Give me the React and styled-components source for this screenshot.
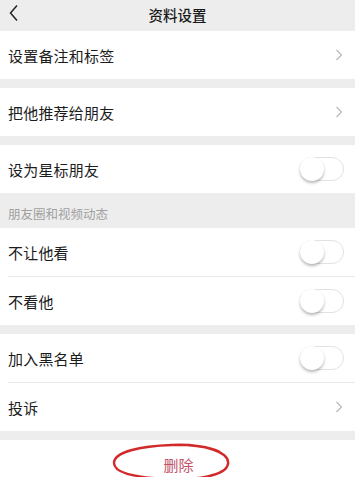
import React from "react";
import styled, { createGlobalStyle } from "styled-components";

const GlobalStyle = createGlobalStyle`
  html, body {
    margin: 0;
    padding: 0;
    background: #ededed;
    font-family: "Noto Sans CJK SC", "Noto Sans", sans-serif;
    color: #1c1c1c;
  }
`;

const Page = styled.div`
  width: 355px;
  display: flex;
  flex-direction: column;
  background: #ededed;
`;

const Header = styled.div`
  height: 31px;
  position: relative;
  display: flex;
  align-items: center;
  justify-content: center;
  background: #ededed;
`;

const Title = styled.div`
  font-size: 14.5px;
  font-weight: 500;
  color: #1a1a1a;
  margin-top: -3px;
`;

const Back = styled.svg`
  position: absolute;
  left: 8px;
  top: 4px;
`;

const Group = styled.div`
  background: #fff;
  display: flex;
  flex-direction: column;
  margin-bottom: ${(p) => (p.$gap ? "9px" : "0")};
`;

const Row = styled.div`
  height: 48px;
  display: flex;
  align-items: center;
  justify-content: space-between;
  padding-right: 12px;
  font-size: 15px;
  letter-spacing: 0.2px;
  border-top: ${(p) => (p.$divider ? "1px solid #eaeaea" : "none")};
  margin-left: ${(p) => (p.$divider ? "8px" : "0")};
  padding-left: ${(p) => (p.$divider ? "0" : "8px")};
`;

const SectionLabel = styled.div`
  height: 35px;
  display: flex;
  align-items: flex-end;
  padding: 0 0 5px 8px;
  box-sizing: border-box;
  font-size: 12.5px;
  color: #a0a0a0;
  background: #ededed;
`;

const Toggle = styled.div`
  width: 44px;
  height: 24px;
  box-sizing: border-box;
  border: 1px solid #e2e2e2;
  border-radius: 12px;
  position: relative;
  margin-right: -1px;
`;

const Knob = styled.div`
  position: absolute;
  left: -1px;
  top: -1px;
  width: 24px;
  height: 24px;
  border-radius: 50%;
  background: #fff;
  box-shadow: 0 2px 3px rgba(0, 0, 0, 0.28);
`;

const DeleteBar = styled.div`
  background: #fff;
  height: 40px;
  display: flex;
  justify-content: center;
  align-items: flex-start;
  position: relative;
`;

const DeleteText = styled.div`
  font-size: 15px;
  color: #c2526a;
  margin-top: 14px;
  margin-left: 2px;
`;

const Ellipse = styled.svg`
  position: absolute;
  left: 110px;
  top: 2px;
`;

const Chevron = () => (
  <svg width="8" height="12" viewBox="0 0 8 12">
    <path d="M1.5 1 L6.5 6 L1.5 11" fill="none" stroke="#b8b8b8" strokeWidth="1.2" />
  </svg>
);

const Switch = () => (
  <Toggle>
    <Knob />
  </Toggle>
);

export default function App() {
  return (
    <Page>
      <GlobalStyle />
      <Header>
        <Back width="12" height="18" viewBox="0 0 12 18">
          <path d="M9 1.5 L2.5 9 L9 16.5" fill="none" stroke="#222" strokeWidth="1.5" />
        </Back>
        <Title>资料设置</Title>
      </Header>
      <Group $gap>
        <Row>
          设置备注和标签
          <Chevron />
        </Row>
      </Group>
      <Group $gap>
        <Row>
          把他推荐给朋友
          <Chevron />
        </Row>
      </Group>
      <Group>
        <Row>
          设为星标朋友
          <Switch />
        </Row>
      </Group>
      <SectionLabel>朋友圈和视频动态</SectionLabel>
      <Group $gap>
        <Row>
          不让他看
          <Switch />
        </Row>
        <Row $divider>
          不看他
          <Switch />
        </Row>
      </Group>
      <Group $gap>
        <Row>
          加入黑名单
          <Switch />
        </Row>
        <Row $divider>
          投诉
          <Chevron />
        </Row>
      </Group>
      <DeleteBar>
        <DeleteText>删除</DeleteText>
        <Ellipse width="124" height="40" viewBox="0 0 124 40">
          <path
            d="M60 3 C 95 2, 120 10, 118 22 C 116 34, 85 38, 60 37 C 30 36, 4 32, 4 21 C 4 10, 30 4, 62 3 C 80 2, 100 5, 110 10"
            fill="none"
            stroke="#d22a2a"
            strokeWidth="2.4"
          />
        </Ellipse>
      </DeleteBar>
    </Page>
  );
}
